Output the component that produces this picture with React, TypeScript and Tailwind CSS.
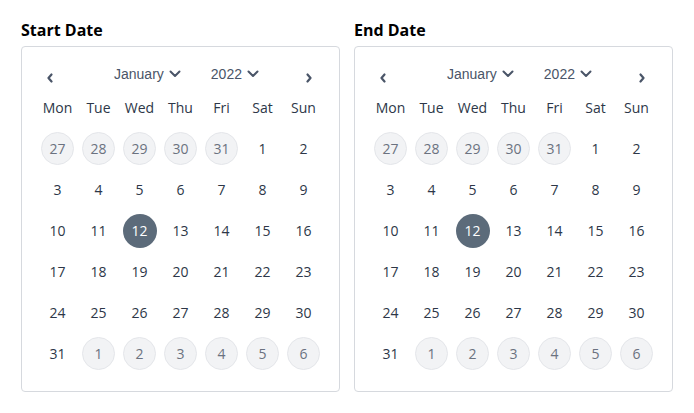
import React from "react"

type Day = { n: number; muted?: boolean }

const weekdays = ["Mon", "Tue", "Wed", "Thu", "Fri", "Sat", "Sun"]

function buildDays(): Day[] {
  const days: Day[] = []
  for (const n of [27, 28, 29, 30, 31]) days.push({ n, muted: true })
  for (let n = 1; n <= 31; n++) days.push({ n })
  for (let n = 1; n <= 6; n++) days.push({ n, muted: true })
  return days
}

function ChevronDown() {
  return (
    <svg width="12" height="8" viewBox="0 0 12 8" fill="none" className="ml-[5px]">
      <path d="M1.5 1.5L6 6L10.5 1.5" stroke="#4a5568" strokeWidth="2" strokeLinecap="round" strokeLinejoin="round" />
    </svg>
  )
}

function ChevronSide({ dir }: { dir: "left" | "right" }) {
  return (
    <svg width="8" height="10" viewBox="0 0 8 10" fill="none">
      <path
        d={dir === "left" ? "M5.5 1.5L2.5 5L5.5 8.5" : "M2.5 1.5L5.5 5L2.5 8.5"}
        stroke="#4a5568"
        strokeWidth="2.2"
        strokeLinecap="round"
        strokeLinejoin="round"
      />
    </svg>
  )
}

function Calendar({ title }: { title: string }) {
  const days = buildDays()
  return (
    <div className="flex flex-col">
      <h2 className="text-[16px] leading-[23px] font-bold text-black mb-[4px] font-['Open_Sans',sans-serif]">{title}</h2>
      <div className="w-[319px] border border-[#d6d9de] rounded-[4px] bg-white px-[15px] pt-[15px] pb-[17px]">
        <div className="flex items-center h-[25px]">
          <button className="w-[26px] h-[25px] flex items-center justify-center pt-[6px]">
            <ChevronSide dir="left" />
          </button>
          <div className="flex-1 flex items-center justify-center pl-[14px] pb-[1px] font-['Liberation_Sans',sans-serif] text-[14px] text-[#4a5568]">
            <span className="flex items-center">
              January
              <ChevronDown />
            </span>
            <span className="flex items-center ml-[30px]">
              2022
              <ChevronDown />
            </span>
          </div>
          <button className="w-[26px] h-[25px] flex items-center justify-center pt-[6px] mr-[2px]">
            <ChevronSide dir="right" />
          </button>
        </div>
        <div className="grid grid-cols-7 font-['Open_Sans',sans-serif] text-[14px]">
          {weekdays.map((w) => (
            <div key={w} className="h-[41px] flex items-center justify-center text-[#2d3748]">
              {w}
            </div>
          ))}
          {days.map((d, i) => (
            <div key={i} className="h-[41px] flex items-center justify-center">
              {d.muted ? (
                <span className="w-[33px] h-[33px] rounded-full bg-[#f2f3f5] border border-[#e4e6ea] flex items-center justify-center text-[#6b7280]">
                  {d.n}
                </span>
              ) : d.n === 12 ? (
                <span className="w-[34px] h-[34px] rounded-full bg-[#5c6b7a] flex items-center justify-center text-white">
                  {d.n}
                </span>
              ) : (
                <span className="text-[#2d3748]">{d.n}</span>
              )}
            </div>
          ))}
        </div>
      </div>
    </div>
  )
}

export default function App() {
  return (
    <div className="w-[694px] h-[413px] bg-white flex gap-[14px] pl-[21px] pt-[19px]">
      <Calendar title="Start Date" />
      <Calendar title="End Date" />
    </div>
  )
}
